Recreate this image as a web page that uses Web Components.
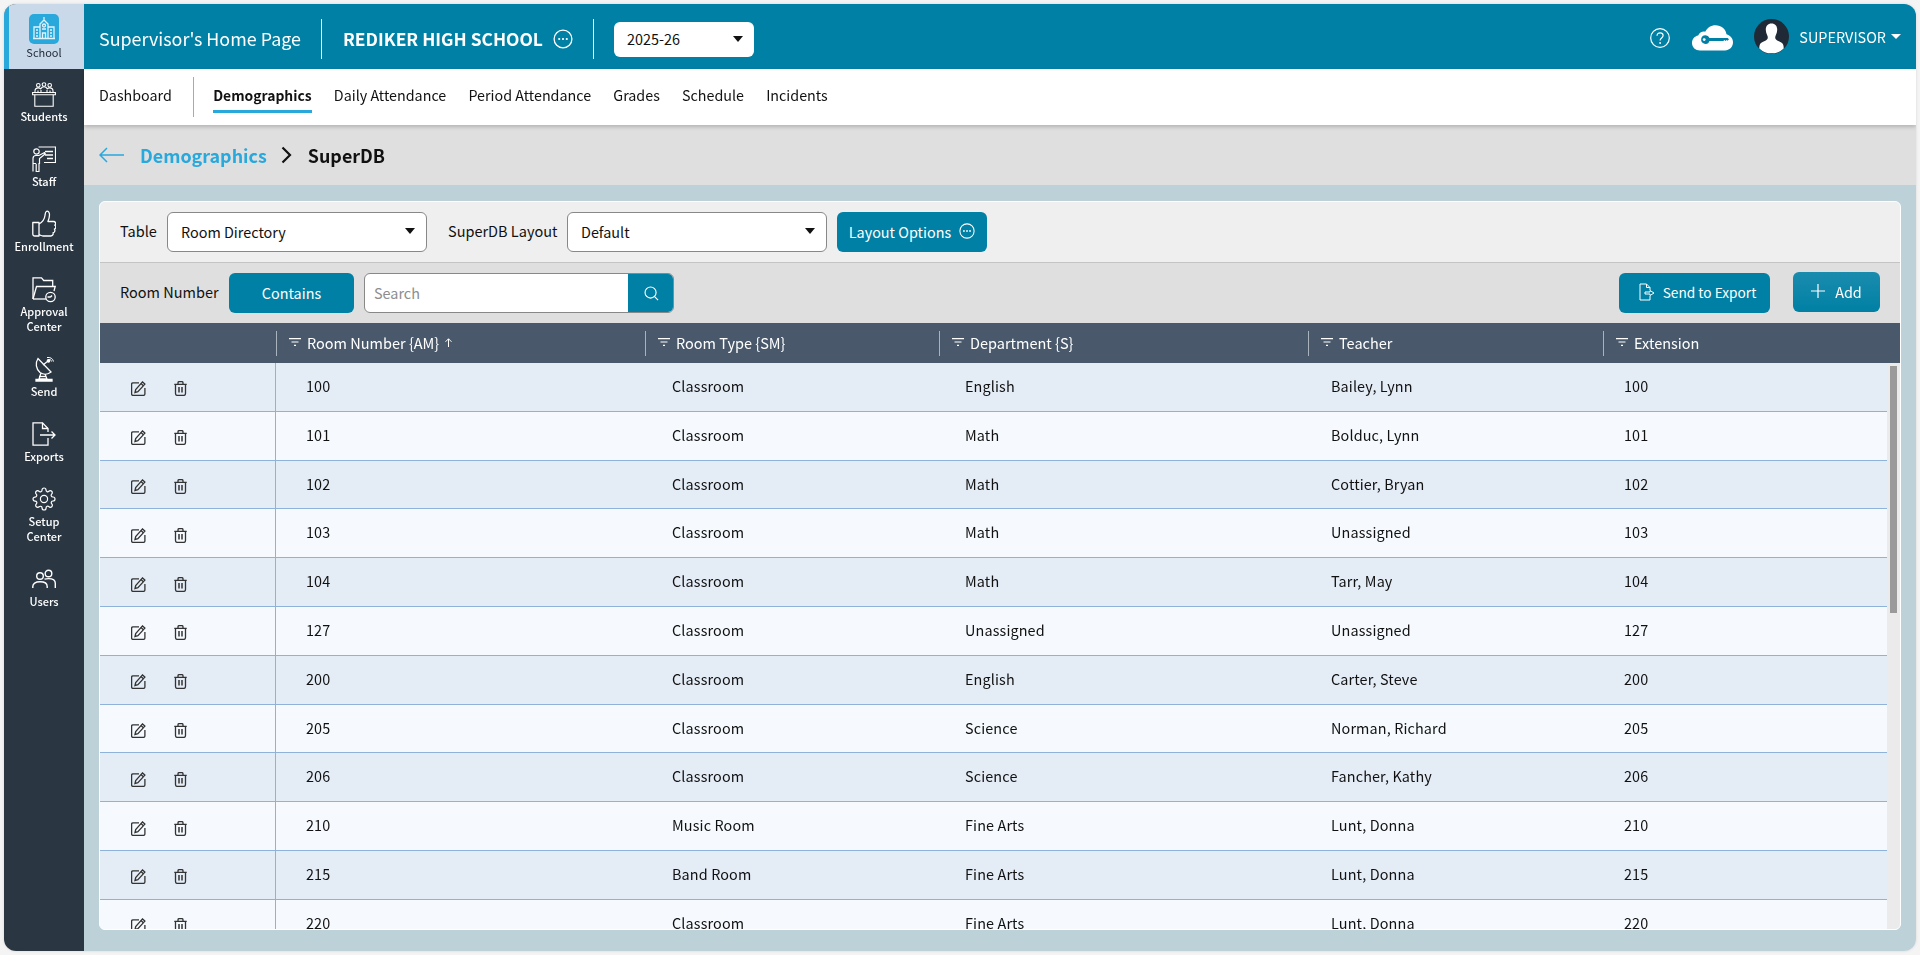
<!doctype html>
<html lang="en">
<head>
<meta charset="utf-8">
<title>SuperDB</title>
<style>
  html, body { margin: 0; height: 100%; }
  body {
    background: #f4f4f4;
    font-family: "Noto Sans CJK SC", "Source Sans Pro", "Liberation Sans", sans-serif;
    color: #111;
    overflow: hidden;
    white-space: nowrap;
  }
</style>
</head>
<body>
<rs-app></rs-app>
<script>
const ICONS = {
  school: '<svg viewBox="0 0 30 30"><rect width="30" height="30" rx="5" fill="#29a8dc"/><g fill="none" stroke="#dff3fb" stroke-width="1.3"><path d="M5 24V13h6M25 24V13h-6M11 24V10l4-4 4 4v14M4 24.500h22M13.500 24v-5h3v5M15 6V3"/><circle cx="15" cy="11.500" r="1.500"/><path d="M7 16h2M7 19h2M7 22h2M21 16h2M21 19h2M21 22h2M13 15h4"/></g></svg>',
  students: '<svg viewBox="0 0 24 25" fill="none" stroke="currentColor" stroke-width="1.100"><circle cx="6.300" cy="3.300" r="1.800"/><circle cx="12" cy="2.500" r="1.800"/><circle cx="17.700" cy="3.300" r="1.800"/><path d="M3 10.500V9c0-2 1.300-3.100 3.300-3.100 1 0 1.900.3 2.500.9.600-1.300 1.700-2 3.200-2s2.600.7 3.200 2c.6-.6 1.500-.9 2.500-.9 2 0 3.300 1.100 3.300 3.100v1.500"/><path d="M6 10.500V8.500M18 10.500V8.500M9 10.500V8M15 10.500V8"/><path d="M.6 10.500h22.800v2.200H.6z"/><path d="M2.800 12.700v11.500h18.400V12.700"/></svg>',
  staff: '<svg viewBox="0 0 24 28" fill="none" stroke="currentColor" stroke-width="1.200"><path d="M6.500 2h17v15.500H12"/><path d="M13 6.500h8M13 10h8M15 13.500h6" stroke-width="1.400"/><circle cx="4.500" cy="6.500" r="2.700"/><path d="M1 26.500V13.500c0-2 1-3 3-3h3l5.500-3 .8 1.300-5.800 4.700v5H7v8H4.200v-7.500M1 18.500h3.200"/></svg>',
  thumb: '<svg viewBox="0 0 24 28" fill="none" stroke="currentColor" stroke-width="1.300" stroke-linejoin="round"><path d="M.8 12.500h6.200v13.500H2.800c-1.200 0-2-.8-2-2z"/><path d="M7 14c3-1.500 5.500-5 6-8.500.2-2 .2-3.500 1.500-4.200 1.600-.7 3 1 3 3.400 0 2.500-.8 5-1.600 6.800h5.600c2.200 0 2.800 2.600 1.300 3.700 1.600 1 1.300 3.400-.4 4 1 1.300.3 3.300-1.300 3.500.5 1.700-.6 3.300-2.300 3.300H11c-1.800 0-2.800-1.200-4-1.300"/></svg>',
  folder: '<svg viewBox="0 0 24 28" fill="none" stroke="currentColor" stroke-width="1.300"><path d="M1 24V2.800h8.500l2.200 2.700h9v6"/><path d="M1 24l3.500-12.500h18.700L22 16"/><path d="M1 24h13"/><circle cx="18.500" cy="22" r="4.700"/><path d="M18.500 22h-3M18.500 22l1.500-1.500" stroke-width="1.500"/></svg>',
  send: '<svg viewBox="0 0 24 26" fill="none" stroke="currentColor" stroke-width="1.300"><path d="M6 2.500C3 7 4 13 8 16.500c3.500 2.500 8 2 11-.5z"/><path d="M11 9l5-4"/><circle cx="16.500" cy="4.800" r="1.200" fill="currentColor"/><path d="M15 1.500c3-.5 6 1 6.500 4M16.500 3.500c1.500-.3 3 .6 3.200 2" stroke-width="1"/><path d="M9 17l-2 6h8l-2-5M4 23.500h16v1.500H4z"/><path d="M7 20.500h7"/></svg>',
  exports: '<svg viewBox="0 0 24 24" fill="none" stroke="currentColor" stroke-width="1.300"><path d="M16 10V6.500L10.500.8H1v22.400h15V16"/><path d="M10.500.8v5.700H16"/><path d="M8 13h15M19.500 9.500L23 13l-3.500 3.500"/></svg>',
  gear: '<svg viewBox="0 0 24 24" fill="none" stroke="currentColor" stroke-width="1.200"><circle cx="12" cy="12" r="3.600"/><path d="M19.400 15a1.650 1.650 0 0 0 .33 1.820l.06.06a2 2 0 0 1 0 2.830 2 2 0 0 1-2.830 0l-.06-.06a1.650 1.650 0 0 0-1.820-.33 1.650 1.650 0 0 0-1 1.510V21a2 2 0 0 1-2 2 2 2 0 0 1-2-2v-.09A1.650 1.650 0 0 0 9 19.400a1.650 1.650 0 0 0-1.820.33l-.06.06a2 2 0 0 1-2.830 0 2 2 0 0 1 0-2.830l.06-.06a1.650 1.650 0 0 0 .33-1.820 1.650 1.650 0 0 0-1.510-1H3a2 2 0 0 1-2-2 2 2 0 0 1 2-2h.09A1.650 1.650 0 0 0 4.600 9a1.650 1.650 0 0 0-.33-1.820l-.06-.06a2 2 0 0 1 0-2.830 2 2 0 0 1 2.830 0l.06.06a1.650 1.650 0 0 0 1.820.33H9a1.650 1.650 0 0 0 1-1.510V3a2 2 0 0 1 2-2 2 2 0 0 1 2 2v.09a1.650 1.650 0 0 0 1 1.510 1.650 1.650 0 0 0 1.820-.33l.06-.06a2 2 0 0 1 2.830 0 2 2 0 0 1 0 2.830l-.06.06a1.650 1.650 0 0 0-.33 1.820V9a1.650 1.650 0 0 0 1.510 1H21a2 2 0 0 1 2 2 2 2 0 0 1-2 2h-.09a1.650 1.650 0 0 0-1.510 1z"/></svg>',
  users: '<svg viewBox="0 0 24 20" fill="none" stroke="currentColor" stroke-width="1.400"><circle cx="8" cy="7" r="3.300"/><circle cx="16.500" cy="4.500" r="3.300"/><path d="M.8 19v-1.500c0-2.800 2.500-4.700 7.200-4.700s7.200 1.900 7.200 4.700V19"/><path d="M12.500 10.200c1.200-.4 2.500-.6 4-.6 4.500 0 6.800 2 6.800 4.700V19"/></svg>',
  more: '<svg viewBox="0 0 20 20" fill="none" stroke="currentColor" stroke-width="1.300"><circle cx="10" cy="10" r="8.900"/><circle cx="6.200" cy="10" r="1.100" fill="currentColor" stroke="none"/><circle cx="10" cy="10" r="1.100" fill="currentColor" stroke="none"/><circle cx="13.800" cy="10" r="1.100" fill="currentColor" stroke="none"/></svg>',
  help: '<svg viewBox="0 0 20 20" fill="none" stroke="currentColor" stroke-width="1.200"><circle cx="10" cy="10" r="9.300"/><path d="M7 7.800c0-1.900 1.300-3 3.100-3s3 1.100 3 2.700c0 2.400-3 2.500-3 5"/><circle cx="10.100" cy="15" r=".9" fill="currentColor" stroke="none"/></svg>',
  cloud: '<svg viewBox="0 0 41 26"><path fill="currentColor" d="M8 25.500C3.500 25.500 0 22.500 0 18c0-3.800 2.700-6.800 6.200-7.400C7.500 7.500 10.500 6 13.200 6.800 15 3 19 .3 23.500.3c5.800 0 10.200 3.700 11 9 3.700 1 6.500 4.200 6.500 8 0 4.800-3.800 8.200-8 8.200z"/><path fill="#0080a4" d="M13.500 10.300a4.300 4.300 0 1 0 4 5.700h13.800l1.100-.9 1.100.8 1.100-.8 1 .6 1.400-1.400-1.300-1.300H17.500a4.300 4.300 0 0 0-4-2.700z"/><circle cx="12.200" cy="14.600" r="1.400" fill="#fff"/></svg>',
  avatar: '<svg viewBox="0 0 35 35"><circle cx="17.500" cy="17.500" r="17.500" fill="#1f2a36"/><path fill="#fff" d="M17.500 4.500c3.800 0 5.900 2.800 5.700 6.600-.1 1.900-.6 3.500-1.300 4.800-.6 1.100-.8 2.200-.6 3.400.2 1.300 1.400 2 3 2.700 2.300 1 4 1.800 4.800 3.400.5 1.100.6 2.900.6 4a17.500 17.500 0 0 1-24.400 0c0-1.100.1-2.900.6-4 .8-1.600 2.500-2.400 4.800-3.400 1.600-.7 2.800-1.400 3-2.700.2-1.200 0-2.300-.6-3.400-.7-1.300-1.200-2.900-1.300-4.800-.2-3.800 1.900-6.600 5.700-6.600z"/></svg>',
  back: '<svg viewBox="0 0 25 16" fill="none" stroke="currentColor" stroke-width="1.500"><path d="M25 8H1M8 1L1 8l7 7"/></svg>',
  chevron: '<svg viewBox="0 0 11 18" fill="none" stroke="currentColor" stroke-width="2.200"><path d="M1.500 1.500L9 9l-7.500 7.500"/></svg>',
  search: '<svg viewBox="0 0 16 16" fill="none" stroke="currentColor" stroke-width="1.200"><circle cx="7" cy="7" r="5.900"/><path d="M11.300 11.300L15 15"/></svg>',
  file: '<svg viewBox="0 0 16 18" fill="none" stroke="currentColor" stroke-width="1"><path d="M11 7V4.500L7.500 1H1v16h10v-4"/><path d="M7.500 1v3.500H11"/><path d="M6 9h5V7.500l4 2.500-4 2.500V11H6z"/></svg>',
  plus: '<svg viewBox="0 0 14 14" fill="none" stroke="currentColor" stroke-width="1.200"><path d="M7 0v14M0 7h14"/></svg>',
  filter: '<svg viewBox="0 0 12 8" fill="none" stroke="currentColor" stroke-width="1.200"><path d="M0 .6h12M2.500 4h7M5 7.400h2"/></svg>',
  up: '<svg viewBox="0 0 7 9" fill="none" stroke="currentColor" stroke-width="1"><path d="M3.500 9V.8M.5 3.800l3-3 3 3"/></svg>',
  edit: '<svg viewBox="0 0 15 15" fill="none" stroke="currentColor" stroke-width="1.300"><path d="M8 1.800H2C1 1.800.6 2.300.6 3.200v9.800c0 .9.400 1.400 1.400 1.400h10.500c.9 0 1.400-.5 1.400-1.400V7"/><path d="M4 11.500l.7-3L11.500.9l2.400 2.200-7 7.600z"/><path d="M10 2.600l2.400 2.200"/></svg>',
  trash: '<svg viewBox="0 0 13 15" fill="none" stroke="currentColor" stroke-width="1.300"><path d="M.3 3.300h12.400M4 3.300V1.800c0-.8.500-1.200 1.200-1.200h2.600c.7 0 1.200.4 1.200 1.200v1.500"/><path d="M1.500 3.300v9.200c0 1.200.7 1.900 1.800 1.900h6.400c1.100 0 1.800-.7 1.800-1.900V3.300"/><path d="M5 6v5.500M8 6v5.500" stroke-width="1.500"/></svg>'
}

const define = (name, css, html, setup) => {
  const template = document.createElement('template')
  template.innerHTML = `<style>${css}</style>${html}`
  customElements.define(name, class extends HTMLElement {
    connectedCallback() {
      if (this.shadowRoot) return
      const root = this.attachShadow({ mode: 'open' })
      root.append(template.content.cloneNode(true))
      if (setup) setup(this, root)
    }
  })
}

define('rs-icon', `
  :host { display: inline-flex; flex: none; }
  svg { display: block; width: 100%; height: 100%; }
`, '', (el, root) => {
  const box = document.createElement('span')
  box.innerHTML = ICONS[el.getAttribute('name')]
  root.append(box.firstChild)
  el.style.width = el.getAttribute('w') + 'px'
  el.style.height = el.getAttribute('h') + 'px'
})

define('rs-side-item', `
  :host {
    display: flex;
    flex-direction: column;
    align-items: center;
    box-sizing: border-box;
    height: 65px;
    padding-top: 11px;
    color: #fff;
    text-align: center;
    font-size: 11px;
    font-weight: 500;
    line-height: 15px;
    white-space: normal;
  }
  :host([two]) { height: 80px; }
  :host([active]) {
    background: #c9d9ea;
    color: #1c2630;
    border-left: 5px solid #29a8dc;
    padding-top: 10px;
    padding-right: 5px;
    font-weight: 400;
  }
  .icon { height: 28px; display: flex; align-items: center; justify-content: center; }
  :host([active]) .icon { height: 30px; }
  .label { width: 60px; padding-top: 1px; }
`, '<div class="icon"><slot name="icon"></slot></div><div class="label"><slot></slot></div>')

define('rs-sidebar', `
  :host { display: flex; flex-direction: column; flex: none; width: 80px; background: #2a3642; }
`, '<slot></slot>')

define('rs-select', `
  :host {
    display: flex;
    align-items: center;
    justify-content: space-between;
    box-sizing: border-box;
    height: 40px;
    padding: 0 11px 2px 13px;
    background: #fff;
    border: 1px solid #888;
    border-radius: 6px;
    font-size: 14.400px;
    color: #111;
  }
  i { width: 0; height: 0; border: 5px solid transparent; border-top: 6px solid #111; border-bottom: 0; }
`, '<span><slot></slot></span><i></i>')

define('rs-button', `
  :host {
    display: inline-flex;
    align-items: center;
    justify-content: center;
    box-sizing: border-box;
    height: 40px;
    padding-bottom: 2px;
    gap: 10px;
    background: #0080a4;
    border-radius: 6px;
    color: #fff;
    font-size: 14.400px;
  }
  :host([raised]) { background: linear-gradient(#1a8cae, #0080a4); }
`, '<slot></slot>')

define('rs-topbar', `
  :host {
    display: flex;
    align-items: center;
    flex: none;
    box-sizing: border-box;
    height: 65px;
    padding: 5px 15px 0;
    background: #0080a4;
    color: #fff;
  }
  .title { font-size: 17.900px; width: 222px; padding-bottom: 2px; }
  .rule { width: 1px; height: 40px; background: #fff; flex: none; }
  .school { display: flex; align-items: center; gap: 10px; width: 271px; padding-left: 21px; box-sizing: border-box; font-size: 17.400px; font-weight: 700; }
  .school span { padding-bottom: 2px; }
  rs-select { width: 140px; height: 35px; margin-left: 20px; border: 0; padding: 0 11px 1px 13px; }
  .right { display: flex; align-items: center; margin-left: auto; margin-top: -6px; }
  .help { margin-top: 4px; }
  .cloud { margin-left: 22px; margin-top: 3px; }
  .user { margin-left: 21px; display: flex; align-items: center; gap: 10px; font-size: 14.400px; }
  .caret { width: 0; height: 0; border: 5px solid transparent; border-top: 5px solid #fff; border-bottom: 0; margin-left: -5px; }
`, `
  <div class="title">Supervisor's Home Page</div>
  <div class="rule"></div>
  <div class="school"><span>REDIKER HIGH SCHOOL</span> <rs-icon name="more" w="20" h="20"></rs-icon></div>
  <div class="rule"></div>
  <rs-select>2025-26</rs-select>
  <div class="right">
    <rs-icon class="help" name="help" w="20" h="20"></rs-icon>
    <rs-icon class="cloud" name="cloud" w="41" h="26"></rs-icon>
    <div class="user"><rs-icon name="avatar" w="35" h="35"></rs-icon>SUPERVISOR <span class="caret"></span></div>
  </div>
`)

define('rs-subnav', `
  :host {
    display: flex;
    align-items: center;
    flex: none;
    height: 56px;
    padding: 0 15px;
    background: #fff;
    box-shadow: 0 2px 4px rgba(0, 0, 0, .2);
    position: relative;
    font-size: 14.300px;
    gap: 22.200px;
  }
  .rule { width: 1px; height: 40px; background: #aaa; margin: 0 -2.500px 0 -1.500px; }
  .tab { line-height: 24px; padding: 1px 0 3px; border-bottom: 3px solid transparent; }
  .on { font-size: 13.900px; font-weight: 700; border-bottom-color: #29a8dc; }
`, `
  <span class="tab">Dashboard</span>
  <span class="rule"></span>
  <span class="tab on">Demographics</span>
  <span class="tab">Daily Attendance</span>
  <span class="tab">Period Attendance</span>
  <span class="tab">Grades</span>
  <span class="tab">Schedule</span>
  <span class="tab">Incidents</span>
`)

define('rs-crumbs', `
  :host {
    display: flex;
    align-items: center;
    flex: none;
    height: 60px;
    padding: 0 15px;
    background: #dfdfdf;
    font-size: 17.900px;
    font-weight: 700;
    line-height: 24px;
  }
  .back { color: #29a8dc; margin-right: 16px; }
  .link { color: #29a8dc; }
  .chev { color: #111; margin: 0 16px 0 14px; }
`, `
  <rs-icon class="back" name="back" w="25" h="16"></rs-icon>
  <span class="link">Demographics</span>
  <rs-icon class="chev" name="chevron" w="11" h="18"></rs-icon>
  <span>SuperDB</span>
`)

define('rs-filter-bar', `
  :host { display: block; flex: none; font-size: 14.500px; color: #111; }
  .top, .bottom { display: flex; align-items: center; box-sizing: border-box; padding-left: 20px; }
  .top { height: 61px; background: #efefef; border-bottom: 1px solid #c4c4c4; }
  .bottom { height: 60px; background: #dfdfdf; padding-right: 20px; }
  .tbl { width: 47px; margin-top: -4px; }
  .lay { width: 119px; margin-left: 21px; margin-top: -4px; }
  .room { width: 109px; margin-top: -4px; }
  .s1 { width: 260px; }
  .s2 { width: 260px; }
  .opts { width: 150px; margin-left: 10px; gap: 8px; }
  .contains { width: 125px; }
  .search {
    display: flex;
    box-sizing: border-box;
    width: 310px;
    height: 40px;
    margin-left: 10px;
    background: #fff;
    border: 1px solid #888;
    border-radius: 6px;
    overflow: hidden;
  }
  .search span { flex: 1; color: #8d8d8d; font-size: 14.400px; line-height: 38px; padding-left: 9px; }
  .search div { width: 46px; margin: -1px; background: #0080a4; color: #fff; display: flex; align-items: center; justify-content: center; }
  .export { width: 151px; margin-left: auto; gap: 8px; font-size: 13.700px; padding-left: 6px; }
  .add { width: 87px; margin-left: 23px; margin-top: -2px; }
`, `
  <div class="top">
    <span class="tbl">Table</span>
    <rs-select class="s1">Room Directory</rs-select>
    <span class="lay">SuperDB Layout</span>
    <rs-select class="s2">Default</rs-select>
    <rs-button class="opts">Layout Options <rs-icon name="more" w="16" h="16"></rs-icon></rs-button>
  </div>
  <div class="bottom">
    <span class="room">Room Number</span>
    <rs-button class="contains">Contains</rs-button>
    <div class="search"><span>Search</span><div><rs-icon name="search" w="15" h="15"></rs-icon></div></div>
    <rs-button class="export"><rs-icon name="file" w="16" h="18"></rs-icon>Send to Export</rs-button>
    <rs-button class="add" raised><rs-icon name="plus" w="14" h="14"></rs-icon>Add</rs-button>
  </div>
`)

const ROOMS = [
  ['100', 'Classroom', 'English', 'Bailey, Lynn', '100'],
  ['101', 'Classroom', 'Math', 'Bolduc, Lynn', '101'],
  ['102', 'Classroom', 'Math', 'Cottier, Bryan', '102'],
  ['103', 'Classroom', 'Math', 'Unassigned', '103'],
  ['104', 'Classroom', 'Math', 'Tarr, May', '104'],
  ['127', 'Classroom', 'Unassigned', 'Unassigned', '127'],
  ['200', 'Classroom', 'English', 'Carter, Steve', '200'],
  ['205', 'Classroom', 'Science', 'Norman, Richard', '205'],
  ['206', 'Classroom', 'Science', 'Fancher, Kathy', '206'],
  ['210', 'Music Room', 'Fine Arts', 'Lunt, Donna', '210'],
  ['215', 'Band Room', 'Fine Arts', 'Lunt, Donna', '215'],
  ['220', 'Classroom', 'Fine Arts', 'Lunt, Donna', '220']
]

define('rs-room-table', `
  :host { display: flex; flex-direction: column; flex: 1; min-height: 0; font-size: 14.400px; }
  .head {
    display: grid;
    grid-template-columns: 176px 369px 294px 369px 295px 1fr;
    align-items: center;
    flex: none;
    height: 40px;
    background: #49596b;
    color: #fff;
    font-size: 14.500px;
  }
  .head div { display: flex; align-items: center; height: 25px; padding: 0 0 2px 12px; gap: 6px; border-left: 1px solid #a9b3bd; box-sizing: border-box; }
  .head div:first-child { border: 0; }
  .wrap { display: flex; flex: 1; min-height: 0; }
  .rows { flex: 1; overflow: hidden; }
  .row {
    display: grid;
    grid-template-columns: 176px 366px 293px 366px 293px 1fr;
    box-sizing: border-box;
    height: 48.800px;
    border-bottom: 1px solid #8fb2da;
    background: #f6fafe;
    letter-spacing: .13px;
  }
  .row:nth-child(odd) { background: #e4ecf6; }
  .row > span { padding-left: 30px; line-height: 45px; }
  .acts { display: flex; align-items: center; gap: 28px; padding-left: 31px; border-right: 1px solid #8fb2da; color: #333; margin-bottom: -1px; padding-top: 3px; box-sizing: border-box; }
  .track { flex: none; width: 13px; background: #ebebeb; box-sizing: border-box; padding: 3px; }
  .thumb { height: 247px; background: #9a9a9a; }
`, `
  <div class="head">
    <div></div>
    <div><rs-icon name="filter" w="12" h="8"></rs-icon>Room Number {AM} <rs-icon name="up" w="7" h="9"></rs-icon></div>
    <div><rs-icon name="filter" w="12" h="8"></rs-icon>Room Type {SM}</div>
    <div><rs-icon name="filter" w="12" h="8"></rs-icon>Department {S}</div>
    <div><rs-icon name="filter" w="12" h="8"></rs-icon>Teacher</div>
    <div><rs-icon name="filter" w="12" h="8"></rs-icon>Extension</div>
  </div>
  <div class="wrap">
    <div class="rows"></div>
    <div class="track"><div class="thumb"></div></div>
  </div>
`, (el, root) => {
  root.querySelector('.rows').innerHTML = ROOMS.map(cells => `
    <div class="row">
      <div class="acts"><rs-icon name="edit" w="15" h="15"></rs-icon><rs-icon name="trash" w="13" h="15"></rs-icon></div>
      ${cells.map(text => `<span>${text}</span>`).join('')}
    </div>`).join('')
})

define('rs-card', `
  :host {
    display: flex;
    flex-direction: column;
    flex: 1;
    min-height: 0;
    margin: 16px 15px 21px;
    background: #f6fafe;
    border: 1px solid #fff;
    border-radius: 6px;
    overflow: hidden;
  }
`, '<slot></slot>')

define('rs-app', `
  :host {
    display: flex;
    box-sizing: border-box;
    position: fixed;
    inset: 4px;
    border-radius: 12px;
    overflow: hidden;
    box-shadow: 0 0 3px rgba(0, 0, 0, .12);
  }
  main { display: flex; flex-direction: column; flex: 1; min-width: 0; background: #bdd1d9; }
`, `
  <rs-sidebar>
    <rs-side-item active><rs-icon slot="icon" name="school" w="30" h="30"></rs-icon>School</rs-side-item>
    <rs-side-item><rs-icon slot="icon" name="students" w="24" h="25"></rs-icon>Students</rs-side-item>
    <rs-side-item><rs-icon slot="icon" name="staff" w="24" h="28"></rs-icon>Staff</rs-side-item>
    <rs-side-item><rs-icon slot="icon" name="thumb" w="24" h="28"></rs-icon>Enrollment</rs-side-item>
    <rs-side-item two><rs-icon slot="icon" name="folder" w="24" h="28"></rs-icon>Approval Center</rs-side-item>
    <rs-side-item><rs-icon slot="icon" name="send" w="24" h="26"></rs-icon>Send</rs-side-item>
    <rs-side-item><rs-icon slot="icon" name="exports" w="24" h="24"></rs-icon>Exports</rs-side-item>
    <rs-side-item two><rs-icon slot="icon" name="gear" w="24" h="24"></rs-icon>Setup Center</rs-side-item>
    <rs-side-item><rs-icon slot="icon" name="users" w="24" h="20"></rs-icon>Users</rs-side-item>
  </rs-sidebar>
  <main>
    <rs-topbar></rs-topbar>
    <rs-subnav></rs-subnav>
    <rs-crumbs></rs-crumbs>
    <rs-card>
      <rs-filter-bar></rs-filter-bar>
      <rs-room-table></rs-room-table>
    </rs-card>
  </main>
`)
</script>
</body>
</html>
